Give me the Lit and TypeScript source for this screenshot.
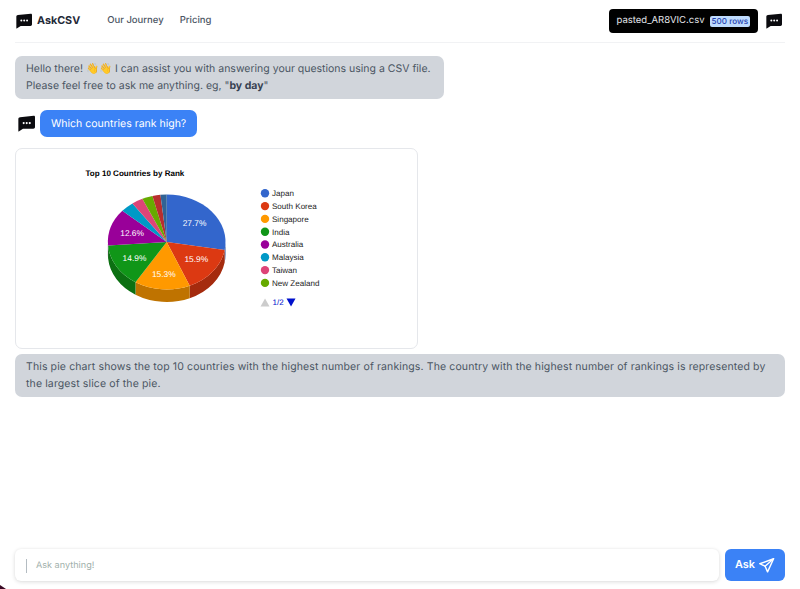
import { LitElement, html, css, svg } from "lit";
import { customElement } from "lit/decorators.js";

const SLICES: [string, string, number, string, number, number][] = [
  ["#3366cc", "#264d99", 27.7, "27.7%", 0, 0],
  ["#dc3912", "#a52b0e", 15.9, "15.9%", 1, -1],
  ["#ff9900", "#bf7300", 15.3, "15.3%", 0, 3],
  ["#109618", "#0c7012", 14.9, "14.9%", -1, 1],
  ["#990099", "#730073", 12.6, "12.6%", 0, 0],
  ["#0099c6", "#007394", 3.7, "", 0, 0],
  ["#dd4477", "#a63359", 3.1, "", 0, 0],
  ["#66aa00", "#4d7f00", 2.9, "", 0, 0],
  ["#b82e2e", "#8a2222", 2.2, "", 0, 0],
  ["#316395", "#254a70", 1.7, "", 0, 0],
];
const LEGEND: [string, string][] = [
  ["Japan", "#3366cc"],
  ["South Korea", "#dc3912"],
  ["Singapore", "#ff9900"],
  ["India", "#109618"],
  ["Australia", "#990099"],
  ["Malaysia", "#0099c6"],
  ["Taiwan", "#dd4477"],
  ["New Zealand", "#66aa00"],
];

const CX = 150.7, CY = 93, RX = 58.8, RY = 47.5, DEPTH = 12.5;
const pt = (pct: number) => {
  const a = (pct / 100) * Math.PI * 2;
  return [CX + RX * Math.sin(a), CY - RY * Math.cos(a)];
};

function pie() {
  let acc = 0;
  const sides: unknown[] = [];
  const tops: unknown[] = [];
  const labels: unknown[] = [];
  for (const [c, dark, v, label, dx, dy] of SLICES) {
    const s = acc, e = acc + v;
    acc = e;
    const [x0, y0] = pt(s), [x1, y1] = pt(e);
    tops.push(svg`<path fill=${c} d="M${CX} ${CY}L${x0} ${y0}A${RX} ${RY} 0 ${v > 50 ? 1 : 0} 1 ${x1} ${y1}Z"/>`);
    const ss = Math.max(s, 25), se = Math.min(e, 75);
    if (se > ss) {
      const [a, b] = pt(ss), [p, q] = pt(se);
      sides.push(svg`<path fill=${dark} d="M${a} ${b}A${RX} ${RY} 0 0 1 ${p} ${q}V${q + DEPTH}A${RX} ${RY} 0 0 0 ${a} ${b + DEPTH}Z"/>`);
    }
    if (label) {
      const m = (s + e) / 2 / 100 * Math.PI * 2;
      const lx = CX + RX * 0.62 * Math.sin(m) + dx, ly = CY - RY * 0.62 * Math.cos(m) + 3 + dy;
      labels.push(svg`<text class="pct" x=${lx} y=${ly} text-anchor="middle">${label}</text>`);
    }
  }
  return svg`${sides}${tops}${labels}`;
}

const BubbleIcon = (cls: string) => html`<svg class=${cls} viewBox="0 0 24 24" aria-hidden="true">
  <path fill="#0b0b0f" d="M0.500 5.500C0.500 4.100 1.500 3.200 2.900 3.100L22.200 1.200C23.200 1.100 24 1.900 24 2.900V17C24 18.400 23 19.400 21.600 19.400H7L1.100 23.200C0.800 23.400 0.500 23.200 0.500 22.900Z"/>
  <circle cx="8" cy="11.400" r="1.500" fill="#fff"/><circle cx="12.300" cy="11.400" r="1.500" fill="#fff"/><circle cx="16.600" cy="11.400" r="1.500" fill="#fff"/>
</svg>`;

@customElement("app-root")
export class AppRoot extends LitElement {
  static styles = css`
    :host {
      display: flex;
      flex-direction: column;
      height: 589px;
      width: 800px;
      overflow: hidden;
      position: relative;
      background: #fff;
      font-family: Inter, "Liberation Sans", sans-serif;
      font-size: 10.5px;
      line-height: 17.5px;
      color: #4b5563;
      box-sizing: border-box;
      text-rendering: geometricPrecision;
    }
    .nav {
      display: flex;
      align-items: center;
      height: 42px;
      margin: 0 15px;
      padding: 0 1px;
      border-bottom: 1px solid #f1f2f4;
      flex: none;
    }
    .logo { width: 16px; height: 16px; margin-right: 5px; flex: none; }
    .brand { font-size: 10.75px; font-weight: 700; color: #1f2937; margin-right: 27px; }
    .link { font-size: 9.5px; font-weight: 500; color: #4b5563; margin-right: 16px; }
    .spacer { flex: 1; }
    .file {
      display: flex;
      align-items: center;
      gap: 5px;
      height: 24px;
      padding: 0 8px;
      background: #000;
      border-radius: 4px;
      color: #e5e7eb;
      font-size: 9.5px;
      margin-right: 8px;
    }
    .rows {
      background: #bfdbfe;
      color: #1e40af;
      font-size: 8.1px;
      font-weight: 500;
      line-height: 11px;
      padding: 0 2px;
      border-radius: 2px;
    }
    .logo2 { width: 16px; height: 16px; margin-right: 2px; flex: none; }
    .chat {
      flex: 1;
      display: flex;
      flex-direction: column;
      align-items: flex-start;
      padding: 13px 15px 0;
    }
    .bubble {
      background: #d1d5db;
      border-radius: 7px;
      padding: 4px 11px;
      color: #4b5563;
      box-sizing: border-box;
      line-height: 16.5px;
    }
    .hello { width: 429px; margin-bottom: 11px; height: 43px; display: flex; align-items: center; }
    .hello b { color: #374151; font-weight: 700; }
    .q { display: flex; align-items: center; gap: 5px; margin-left: 3px; margin-bottom: 11px; }
    .q svg { width: 17px; height: 17px; flex: none; }
    .ask {
      background: #3b82f6;
      color: #fff;
      border-radius: 7px;
      height: 27px;
      padding: 0 11px;
      display: flex;
      align-items: center;
    }
    .card {
      width: 403px;
      height: 201px;
      border: 1px solid #e5e7eb;
      border-radius: 7px;
      box-sizing: border-box;
      margin-bottom: 5px;
      overflow: hidden;
    }
    .card svg { display: block; }
    .answer { width: 770px; height: 43px; display: flex; align-items: center; letter-spacing: 0.12px; }
    .title { font: 700 8.07px "Liberation Sans", Arial, sans-serif; fill: #000; }
    .pct { font: 8.4px "Liberation Sans", Arial, sans-serif; fill: #fff; }
    .leg { font: 8.05px "Liberation Sans", Arial, sans-serif; fill: #222; }
    .pager { font: 8.05px "Liberation Sans", Arial, sans-serif; fill: #0011cc; }
    .bar { display: flex; gap: 6px; margin: 0 15px; height: 32px; margin-bottom: 8px; flex: none; }
    .input {
      flex: 1;
      display: flex;
      align-items: center;
      background: #fff;
      border-radius: 6px;
      box-shadow: 0 1px 4px rgba(0, 0, 0, 0.14), 0 0 2px rgba(0, 0, 0, 0.04);
      padding: 1px 0 0 11px;
      box-sizing: border-box;
      font-size: 9.1px;
      color: #9fb0ab;
    }
    .caret { width: 1px; height: 14px; background: #b4bcc2; margin-right: 9px; }
    .send {
      width: 60px;
      background: #3b82f6;
      color: #fff;
      border-radius: 6px;
      display: flex;
      align-items: center;
      justify-content: center;
      gap: 3px;
      font-size: 10.9px;
      font-weight: 600;
    }
    .send svg { width: 17px; height: 17px; }
    .corner {
      position: absolute;
      left: 0;
      bottom: 0;
      width: 6px;
      height: 4px;
      background: #3a0a24;
      clip-path: polygon(0 0, 100% 100%, 0 100%);
    }
  `;

  render() {
    return html`
      <div class="nav">
        ${BubbleIcon("logo")}
        <span class="brand">AskCSV</span>
        <span class="link">Our Journey</span>
        <span class="link">Pricing</span>
        <span class="spacer"></span>
        <div class="file">pasted_AR8VIC.csv <span class="rows">500 rows</span></div>
        ${BubbleIcon("logo2")}
      </div>
      <div class="chat">
        <div class="bubble hello"><div>Hello there! 👋👋 I can assist you with answering your questions using a CSV file.<br />Please feel free to ask me anything. eg, "<b>by day</b>"</div></div>
        <div class="q">${BubbleIcon("")}<div class="ask">Which countries rank high?</div></div>
        <div class="card">
          <svg width="401" height="199" viewBox="0 0 401 199">
            <text class="title" x="69.500" y="26.500">Top 10 Countries by Rank</text>
            ${pie()}
            ${LEGEND.map(([n, c], i) => svg`
              <circle cx="249" cy=${44.3 + i * 12.8} r="4.200" fill=${c}/>
              <text class="leg" x="256" y=${47.2 + i * 12.8}>${n}</text>`)}
            <path fill="#ccc" d="M244.500 157.500L253.500 157.500L249 149.500Z"/>
            <text class="pager" x="256.500" y="156">1/2</text>
            <path fill="#0011cc" d="M270.500 149.500H279.500L275 157.500Z"/>
          </svg>
        </div>
        <div class="bubble answer"><div>This pie chart shows the top 10 countries with the highest number of rankings. The country with the highest number of rankings is represented by the largest slice of the pie.</div></div>
      </div>
      <div class="bar">
        <div class="input"><span class="caret"></span>Ask anything!</div>
        <div class="send">Ask
          <svg viewBox="0 0 24 24" fill="none" stroke="#fff" stroke-width="2" stroke-linejoin="round" stroke-linecap="round"><path d="M22 2.500L2.500 9.500L10 13L13.500 21Z"/><path d="M22 2.500L10 13"/></svg>
        </div>
      </div>
      <div class="corner"></div>
    `;
  }
}
